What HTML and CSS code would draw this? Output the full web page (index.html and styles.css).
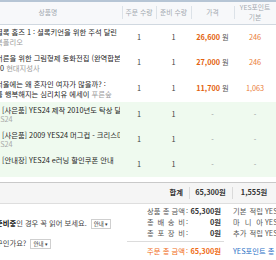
FILE: index.html
```html
<!DOCTYPE html>
<html lang="ko">
<head>
<meta charset="utf-8">
<title>장바구니</title>
<link rel="stylesheet" href="styles.css">
</head>
<body>
<div class="cart">
  <table class="items">
    <colgroup>
      <col class="c-name"><col class="c-qty"><col class="c-ready"><col class="c-price"><col class="c-pt">
    </colgroup>
    <thead>
      <tr><th>상품명</th><th>주문 수량</th><th>준비 수량</th><th>가격</th><th>YES포인트<br>기본</th></tr>
    </thead>
    <tbody>
      <tr class="book">
        <td class="name"><div class="l1">셜록 홈즈 1 : 셜록키언을 위한 주석 달린</div><div class="l2"><span class="pub">북폴리오</span></div></td>
        <td>1</td><td>1</td>
        <td class="price"><b>26,600</b> <span class="won">원</span></td>
        <td class="pt">246</td>
      </tr>
      <tr class="book">
        <td class="name"><div class="l1">어른을 위한 그림형제 동화전집 (완역합본)</div><div class="l2">10 <span class="pub">현대지성사</span></div></td>
        <td>1</td><td>1</td>
        <td class="price"><b>27,000</b> <span class="won">원</span></td>
        <td class="pt">246</td>
      </tr>
      <tr class="book">
        <td class="name"><div class="l1">서울에는 왜 혼자인 여자가 많을까? :</div><div class="l2">를 행복해지는 심리치유 에세이 <span class="pub">푸른숲</span></div></td>
        <td>1</td><td>1</td>
        <td class="price"><b>11,700</b> <span class="won">원</span></td>
        <td class="pt">1,063</td>
      </tr>
      <tr class="gift">
        <td class="name"><div class="l1">[사은품] YES24 제작 2010년도 탁상 달력</div><div class="l2">YES24</div></td>
        <td>1</td><td>1</td><td class="dash">-</td><td class="dash">-</td>
      </tr>
      <tr class="gift">
        <td class="name"><div class="l1">[사은품] 2009 YES24 머그컵 - 크리스마스</div><div class="l2">YES24</div></td>
        <td>1</td><td>1</td><td class="dash">-</td><td class="dash">-</td>
      </tr>
      <tr class="gift">
        <td class="name"><div class="l1">[안내장] YES24 e러닝 할인쿠폰 안내</div><div class="l2">&nbsp;</div></td>
        <td>1</td><td>1</td><td class="dash">-</td><td class="dash">-</td>
      </tr>
    </tbody>
  </table>
</div>

<div class="total">
  <span class="lbl">합계</span>
  <span class="cell">65,300원</span>
  <span class="cell">1,555원</span>
</div>

<div class="summary">
  <div class="notes">
    <p><b>준비중</b>인 경우 꼭 읽어 보세요. <span class="btn">안내<i>▾</i></span></p>
    <p>구인가요? <span class="btn">안내<i>▾</i></span></p>
  </div>
  <div class="totals">
    <div class="amounts">
      <div class="row"><span class="k">상품 총 금액</span><span class="c">:</span><span class="v">65,300원</span></div>
      <div class="row"><span class="k">총 배 송 비</span><span class="c">:</span><span class="v">0원</span></div>
      <div class="row"><span class="k">총 포 장 비</span><span class="c">:</span><span class="v">0원</span></div>
    </div>
    <div class="points">
      <div class="row"><span class="k">기본 적립</span><span class="pv">YES포인트 : 1,555원</span></div>
      <div class="row"><span class="k">마 니 아</span><span class="pv">YES포인트 : 0원</span></div>
      <div class="row"><span class="k">추가 적립</span><span class="pv">YES포인트 : 0원</span></div>
    </div>
    <div class="grand"><span class="k">주문 총 금액</span><span class="c">:</span><b>65,300원</b></div>
    <div class="ptotal">YES포인트 총 적립</div>
  </div>
</div>
</body>
</html>
```
FILE: styles.css
```css
* { box-sizing: border-box; }
html, body { margin: 0; padding: 0; }
body {
  width: 276px;
  height: 260px;
  overflow: hidden;
  background: #fff;
  font-family: "Noto Sans CJK KR", "Noto Sans", sans-serif;
  font-size: 7.3px;
  line-height: 1;
  color: #333;
}

.cart { margin-left: -26px; width: 302px; }
.items { border-collapse: collapse; table-layout: fixed; width: 302px; }
.c-name { width: 148px; }
.c-qty { width: 34px; }
.c-ready { width: 35px; }
.c-price { width: 43px; }
.c-pt { width: 42px; }

.items th {
  height: 23px;
  padding: 0;
  border-top: 2px solid #b6c5d5;
  border-bottom: 1px solid #d0d8e0;
  background: #f7f8fa;
  color: #a3a9b0;
  font-weight: normal;
  font-size: 6.8px;
  line-height: 9.5px;
  text-align: center;
  vertical-align: middle;
  white-space: nowrap;
  overflow: hidden;
}
.items th + th {
  background: #f7f8fa linear-gradient(#dce2e8, #dce2e8) left center / 1px 13px no-repeat;
}

.items td {
  padding: 0;
  height: 26px;
  text-align: center;
  vertical-align: middle;
  color: #444;
  white-space: nowrap;
  overflow: hidden;
}
.items .gift td { height: 25px; background: #effaef; }

.items td.name {
  text-align: left;
  padding-left: 22px;
  padding-right: 2px;
  color: #1e1e1e;
}
.name div { line-height: 10px; overflow: hidden; }
.gift .name div { line-height: 9px; }
.gift .name .l1 { padding-left: 6px; }
.gift .name .l2 { margin-left: -4px; color: #aaa; }
.pub { color: #9b9b9b; }

.price b { color: #e3620e; font-weight: bold; }
.price .won { color: #555; }
.items td.pt { color: #ea7d3a; }
.items td.dash { color: #999; }

.total {
  display: grid;
  grid-template-columns: 1fr 43px 44px;
  align-items: center;
  height: 22px;
  margin-top: 5px;
  border-top: 1px solid #c9c9c9;
  border-bottom: 1px solid #dedede;
  background: #f5f5f5;
  font-weight: bold;
  color: #333;
}
.total .lbl { text-align: right; padding-right: 6px; }
.total .cell {
  height: 100%;
  display: flex;
  align-items: center;
  justify-content: center;
  background: linear-gradient(#dadada, #dadada) left center / 1px 12px no-repeat;
}

.summary { display: grid; grid-template-columns: 127px 1fr; }

.notes {
  margin-left: -4px;
  padding-top: 13px;
  display: flex;
  flex-direction: column;
  gap: 8px;
  color: #444;
  overflow: hidden;
}
.notes p { margin: 0; line-height: 12px; white-space: nowrap; }
.notes b { color: #111; }
.btn {
  display: inline-block;
  margin-left: 2px;
  padding: 0 2px;
  border: 1px solid #cfcfcf;
  background: #fff;
  font-size: 5.5px;
  line-height: 7px;
  color: #333;
  vertical-align: middle;
}
.btn i { font-style: normal; font-size: 5px; margin-left: 1px; }

.totals { display: grid; grid-template-columns: 97px 1fr; }
.row { display: flex; line-height: 11px; white-space: nowrap; }
.k { text-align-last: justify; color: #555; flex: none; }
.amounts { padding: 2px 3px 2px 20px; border-bottom: 1px solid #dcdcdc; }
.amounts .k { width: 38px; }
.c { margin: 0 2px 0 1px; color: #555; }
.v { margin-left: auto; font-weight: bold; color: #333; }

.points { padding: 2px 0 0 9px; overflow: hidden; }
.points .k { width: 30px; }
.pv { margin-left: 2px; color: #555; }

.grand {
  display: flex;
  margin-top: 4px;
  padding: 0 3px 0 20px;
  line-height: 11px;
  color: #f06a12;
  white-space: nowrap;
}
.grand .k { width: 38px; color: #f06a12; }
.grand .c { color: #f06a12; }
.grand b { margin-left: auto; }
.ptotal {
  margin-top: 4px;
  padding-left: 9px;
  line-height: 11px;
  color: #1f70c6;
  white-space: nowrap;
  overflow: hidden;
}
```
